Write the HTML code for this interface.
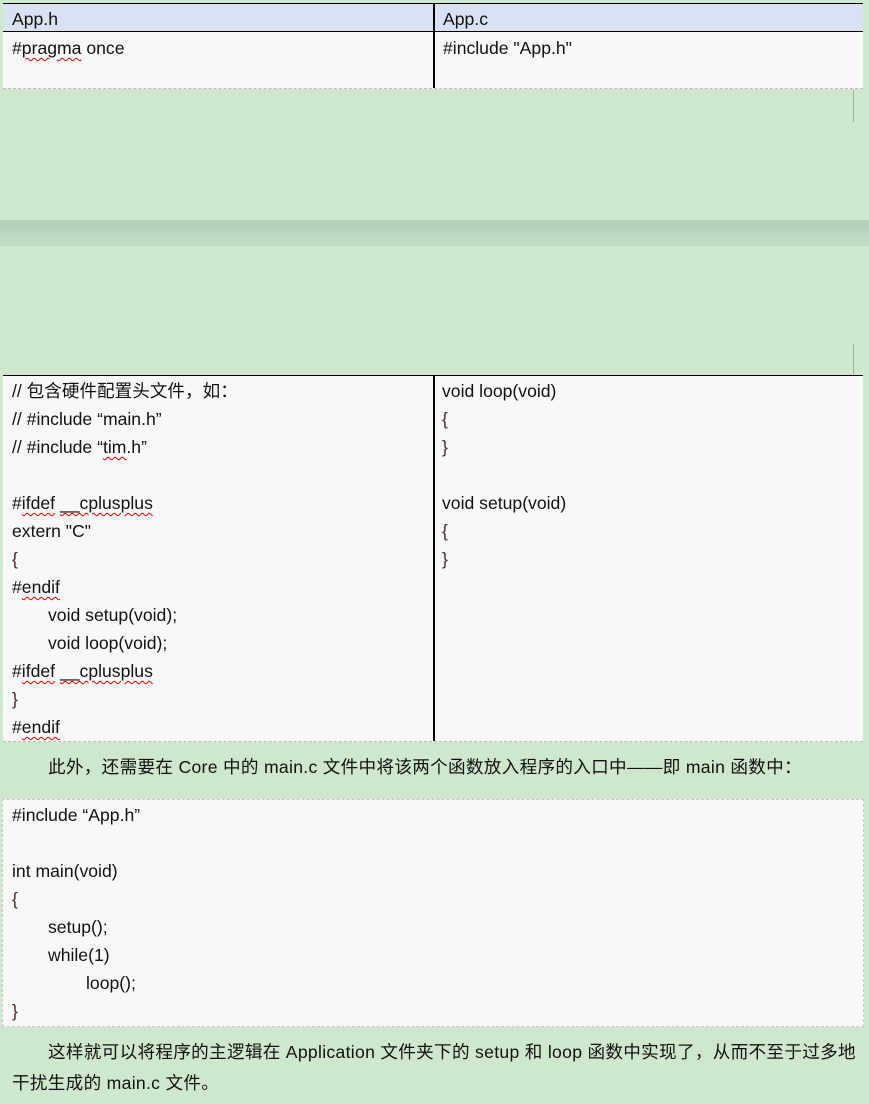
<!DOCTYPE html>
<html><head><meta charset="utf-8"><style>
body{margin:0;width:869px;height:1104px;background:#cfe7cc;position:relative;overflow:hidden;font-family:"Liberation Sans","Noto Sans CJK SC",sans-serif;font-size:17.6px;color:#111;letter-spacing:0}
.a{position:absolute}
.l{position:absolute;line-height:28px;white-space:pre}
.w{text-decoration:underline wavy #d00;text-decoration-thickness:1px;text-underline-offset:3px}
.b{color:#4a2a20}
.i{display:inline-block;width:36px}
.i2{display:inline-block;width:74px}
.p{letter-spacing:0.3px}
</style></head><body>
<!-- table 1 -->
<div class="a" style="left:3px;top:3px;width:860px;height:85px;background:#f8f8f8;border-bottom:1px dashed #bbb"></div>
<div class="a" style="left:3px;top:3px;width:860px;height:27px;background:#d9e2f3;border-top:1.5px solid #000;border-bottom:1.5px solid #000"></div>
<div class="a" style="left:433px;top:4px;width:1.5px;height:84px;background:#000"></div>
<div class="l" style="left:12px;top:5px">App.h</div>
<div class="l" style="left:443px;top:5px">App.c</div>
<div class="l" style="left:12px;top:34px">#<span class="w">pragma</span> once</div>
<div class="l" style="left:443px;top:34px">#include "App.h"</div>
<div class="a" style="left:853px;top:90px;width:1px;height:32px;background:#9ab59c"></div>
<!-- separator band -->
<div class="a" style="left:0;top:220px;width:869px;height:26px;background:linear-gradient(#b6cfb8,#c3dcc5)"></div>
<div class="a" style="left:853px;top:344px;width:1px;height:32px;background:#9ab59c"></div>
<!-- table 2 -->
<div class="a" style="left:3px;top:375px;width:860px;height:365px;background:#f8f8f8;border-top:1.5px solid #000;border-bottom:1px dashed #bbb"></div>
<div class="a" style="left:433px;top:376px;width:1.5px;height:365px;background:#000"></div>
<div class="l" style="left:12px;top:377px">// 包含硬件配置头文件，如：
// #include “main.h”
// #include “<span class="w">tim</span>.h”

#<span class="w">ifdef</span> <span class="w">__cplusplus</span>
extern "C"
<span class="b">{</span>
#<span class="w">endif</span>
<span class="i"></span>void setup(void);
<span class="i"></span>void loop(void);
#<span class="w">ifdef</span> <span class="w">__cplusplus</span>
<span class="b">}</span>
#<span class="w">endif</span></div>
<div class="l" style="left:442px;top:377px">void loop(void)
<span class="b">{</span>
<span class="b">}</span>

void setup(void)
<span class="b">{</span>
<span class="b">}</span></div>
<div class="l p" style="left:48px;top:753px">此外，还需要在 Core 中的 main.c 文件中将该两个函数放入程序的入口中——即 main 函数中：</div>
<!-- code box -->
<div class="a" style="left:2px;top:799px;width:860px;height:226px;background:#f8f8f8;border:1px dashed #c8c8c8"></div>
<div class="l" style="left:12px;top:801px">#include “App.h”

int main(void)
<span class="b">{</span>
<span class="i"></span>setup();
<span class="i"></span>while(1)
<span class="i2"></span>loop();
<span class="b">}</span></div>
<div class="l p" style="left:48px;top:1038px">这样就可以将程序的主逻辑在 Application 文件夹下的 setup 和 loop 函数中实现了，从而不至于过多地</div>
<div class="l p" style="left:12px;top:1069px">干扰生成的 main.c 文件。</div>
</body></html>
